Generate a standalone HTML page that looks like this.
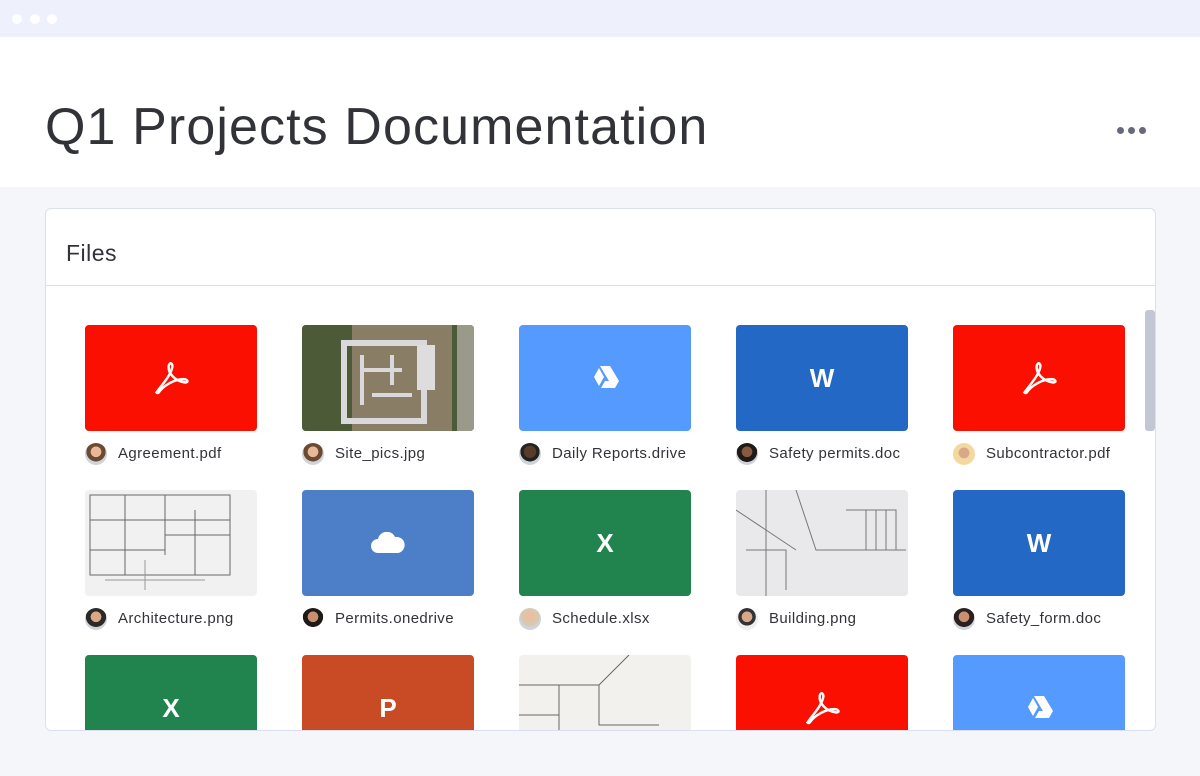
<!DOCTYPE html>
<html><head><meta charset="utf-8"><style>
*{margin:0;padding:0;box-sizing:border-box}
body{width:1200px;height:776px;background:#f5f6fa;font-family:"Liberation Sans",sans-serif;position:relative;overflow:hidden}
.top{position:absolute;left:0;top:0;width:1200px;height:37px;background:#eef0fc}
.top i{position:absolute;top:14px;width:10px;height:10px;border-radius:50%;background:#fff}
.hdr{position:absolute;left:0;top:37px;width:1200px;height:150px;background:#fff}
h1{position:absolute;left:45px;top:97px;font-size:52px;font-weight:400;color:#323338;letter-spacing:1.1px}
.more{position:absolute;left:1117px;top:121px}
.more i{display:inline-block;width:7px;height:7px;border-radius:50%;background:#676879;margin-right:4px}
.panel{position:absolute;left:45px;top:208px;width:1111px;height:523px;background:#fff;border:1px solid #dcdff0;border-radius:6px;overflow:hidden}
.ph{height:77px;border-bottom:1px solid #dcdff0;padding:31px 0 0 20px;font-size:23px;color:#323338;letter-spacing:0.5px}
.scroll{position:absolute;left:1099px;top:101px;width:10px;height:121px;background:#c3c6d4;border-radius:3px}
.card{position:absolute;width:172px;height:106px;border-radius:4px;overflow:hidden;display:flex;align-items:center;justify-content:center;color:#fff;font-weight:700;font-size:26px}
.lab{position:absolute;font-size:15px;color:#323338;height:22px;line-height:22px;padding-left:33px;white-space:nowrap;letter-spacing:0.4px}
.lab b{position:absolute;left:0;top:0;width:22px;height:22px;border-radius:50%;background:radial-gradient(circle at 50% 40%,#e8b898 0 30%,#6b4a32 32% 55%,#cfd3da 57%)}
</style></head><body>
<div class="top"><i style="left:12px"></i><i style="left:30px"></i><i style="left:47px"></i></div>
<div class="hdr"></div>
<h1>Q1 Projects Documentation</h1>
<div class="more"><i></i><i></i><i></i></div>
<div class="panel"><div class="ph">Files</div><div class="scroll"></div></div>

<!-- row 1 -->
<div class="card" style="left:85px;top:325px;background:#fa0f00"><svg width="38" height="38" viewBox="0 0 34 34"><path d="M4 30c4-6 12-14 14-22 1-4-2-6-3-2-1 6 5 14 15 15 3 0 2-3-2-3-8 0-18 6-22 12-1 1-2 0-2 0z" fill="none" stroke="#fff" stroke-width="2.2"/></svg></div>
<div class="card" style="left:302px;top:325px;background:#4a4f3a"><svg width="172" height="106"><rect width="172" height="106" fill="#4d5a38"/><rect x="50" y="0" width="100" height="106" fill="#8a7d66"/><rect x="42" y="18" width="80" height="78" fill="none" stroke="#d9d9dc" stroke-width="6"/><path d="M60 30v50M60 45h40M90 30v30M70 70h40" stroke="#d9d9dc" stroke-width="4"/><rect x="115" y="20" width="18" height="45" fill="#ddd"/><rect x="155" y="0" width="17" height="106" fill="#9a9a8a"/></svg></div>
<div class="card" style="left:519px;top:325px;background:#559bff"><svg width="28" height="26" viewBox="0 0 28 26"><path d="M9 1h10l9 15h-10zM8 3l5 9-5 9-5-9zM10 23l4-7h14l-4 7z" fill="#fff"/></svg></div>
<div class="card" style="left:736px;top:325px;background:#2368c4">W</div>
<div class="card" style="left:953px;top:325px;background:#fa0f00"><svg width="38" height="38" viewBox="0 0 34 34"><path d="M4 30c4-6 12-14 14-22 1-4-2-6-3-2-1 6 5 14 15 15 3 0 2-3-2-3-8 0-18 6-22 12-1 1-2 0-2 0z" fill="none" stroke="#fff" stroke-width="2.2"/></svg></div>
<div class="lab" style="left:85px;top:443px"><b></b>Agreement.pdf</div>
<div class="lab" style="left:302px;top:443px"><b></b>Site_pics.jpg</div>
<div class="lab" style="left:519px;top:443px"><b style="background:radial-gradient(circle at 50% 40%,#5a3a28 0 35%,#222 37% 55%,#cfd3da 57%)"></b>Daily Reports.drive</div>
<div class="lab" style="left:736px;top:443px"><b style="background:radial-gradient(circle at 50% 40%,#8a5a40 0 30%,#1e1a18 32% 58%,#cfd3da 60%)"></b>Safety permits.doc</div>
<div class="lab" style="left:953px;top:443px"><b style="background:radial-gradient(circle at 50% 45%,#d8a888 0 32%,#f3d9a0 34%)"></b>Subcontractor.pdf</div>

<!-- row 2 -->
<div class="card" style="left:85px;top:490px;background:#f1f1f1"><svg width="172" height="106"><g stroke="#666" stroke-width="1" fill="none"><rect x="5" y="5" width="140" height="80"/><path d="M5 30h140M40 5v80M80 5v60M110 20v65M5 60h75M80 45h65"/><path d="M20 90h100M60 70v30" stroke="#999"/></g></svg></div>
<div class="card" style="left:302px;top:490px;background:#4c7fc8"><svg width="36" height="22" viewBox="0 0 36 22"><path d="M8 21a7 7 0 0 1 0-14 9 9 0 0 1 17-2 8 8 0 0 1 3 16z" fill="#fff"/></svg></div>
<div class="card" style="left:519px;top:490px;background:#21844f">X</div>
<div class="card" style="left:736px;top:490px;background:#e9e9ec"><svg width="172" height="106"><g stroke="#777" stroke-width="1" fill="none"><path d="M0 20l60 40M30 0v106M60 0l20 60h90M110 20h50v40M130 20v40M140 20v40M150 20v40M10 60h40v40"/></g></svg></div>
<div class="card" style="left:953px;top:490px;background:#2368c4">W</div>
<div class="lab" style="left:85px;top:608px"><b style="background:radial-gradient(circle at 50% 40%,#d8a888 0 30%,#2b2a28 32% 58%,#cfd3da 60%)"></b>Architecture.png</div>
<div class="lab" style="left:302px;top:608px"><b style="background:radial-gradient(circle at 50% 40%,#c89070 0 30%,#1e1a18 32% 58%,#fff 60%)"></b>Permits.onedrive</div>
<div class="lab" style="left:519px;top:608px"><b style="background:radial-gradient(circle at 50% 40%,#e8c0a0 0 30%,#d8c8b0 32% 55%,#cfd3da 57%)"></b>Schedule.xlsx</div>
<div class="lab" style="left:736px;top:608px"><b style="background:radial-gradient(circle at 50% 40%,#d8a888 0 30%,#333 32% 50%,#eee 52%)"></b>Building.png</div>
<div class="lab" style="left:953px;top:608px"><b style="background:radial-gradient(circle at 50% 40%,#c89070 0 30%,#2a2020 32% 58%,#cfd3da 60%)"></b>Safety_form.doc</div>

<!-- row 3 (clipped) -->
<div style="position:absolute;left:0;top:655px;width:1200px;height:75px;overflow:hidden">
<div class="card" style="left:85px;top:0;background:#21844f">X</div>
<div class="card" style="left:302px;top:0;background:#c94b26">P</div>
<div class="card" style="left:519px;top:0;background:#f3f1ee"><svg width="172" height="106"><g stroke="#666" fill="none"><path d="M0 30h80l30-30M40 30v70M80 30v40h60M0 60h40"/></g></svg></div>
<div class="card" style="left:736px;top:0;background:#fa0f00"><svg width="38" height="38" viewBox="0 0 34 34"><path d="M4 30c4-6 12-14 14-22 1-4-2-6-3-2-1 6 5 14 15 15 3 0 2-3-2-3-8 0-18 6-22 12-1 1-2 0-2 0z" fill="none" stroke="#fff" stroke-width="2.2"/></svg></div>
<div class="card" style="left:953px;top:0;background:#559bff"><svg width="28" height="26" viewBox="0 0 28 26"><path d="M9 1h10l9 15h-10zM8 3l5 9-5 9-5-9zM10 23l4-7h14l-4 7z" fill="#fff"/></svg></div>
</div>
</body></html>
